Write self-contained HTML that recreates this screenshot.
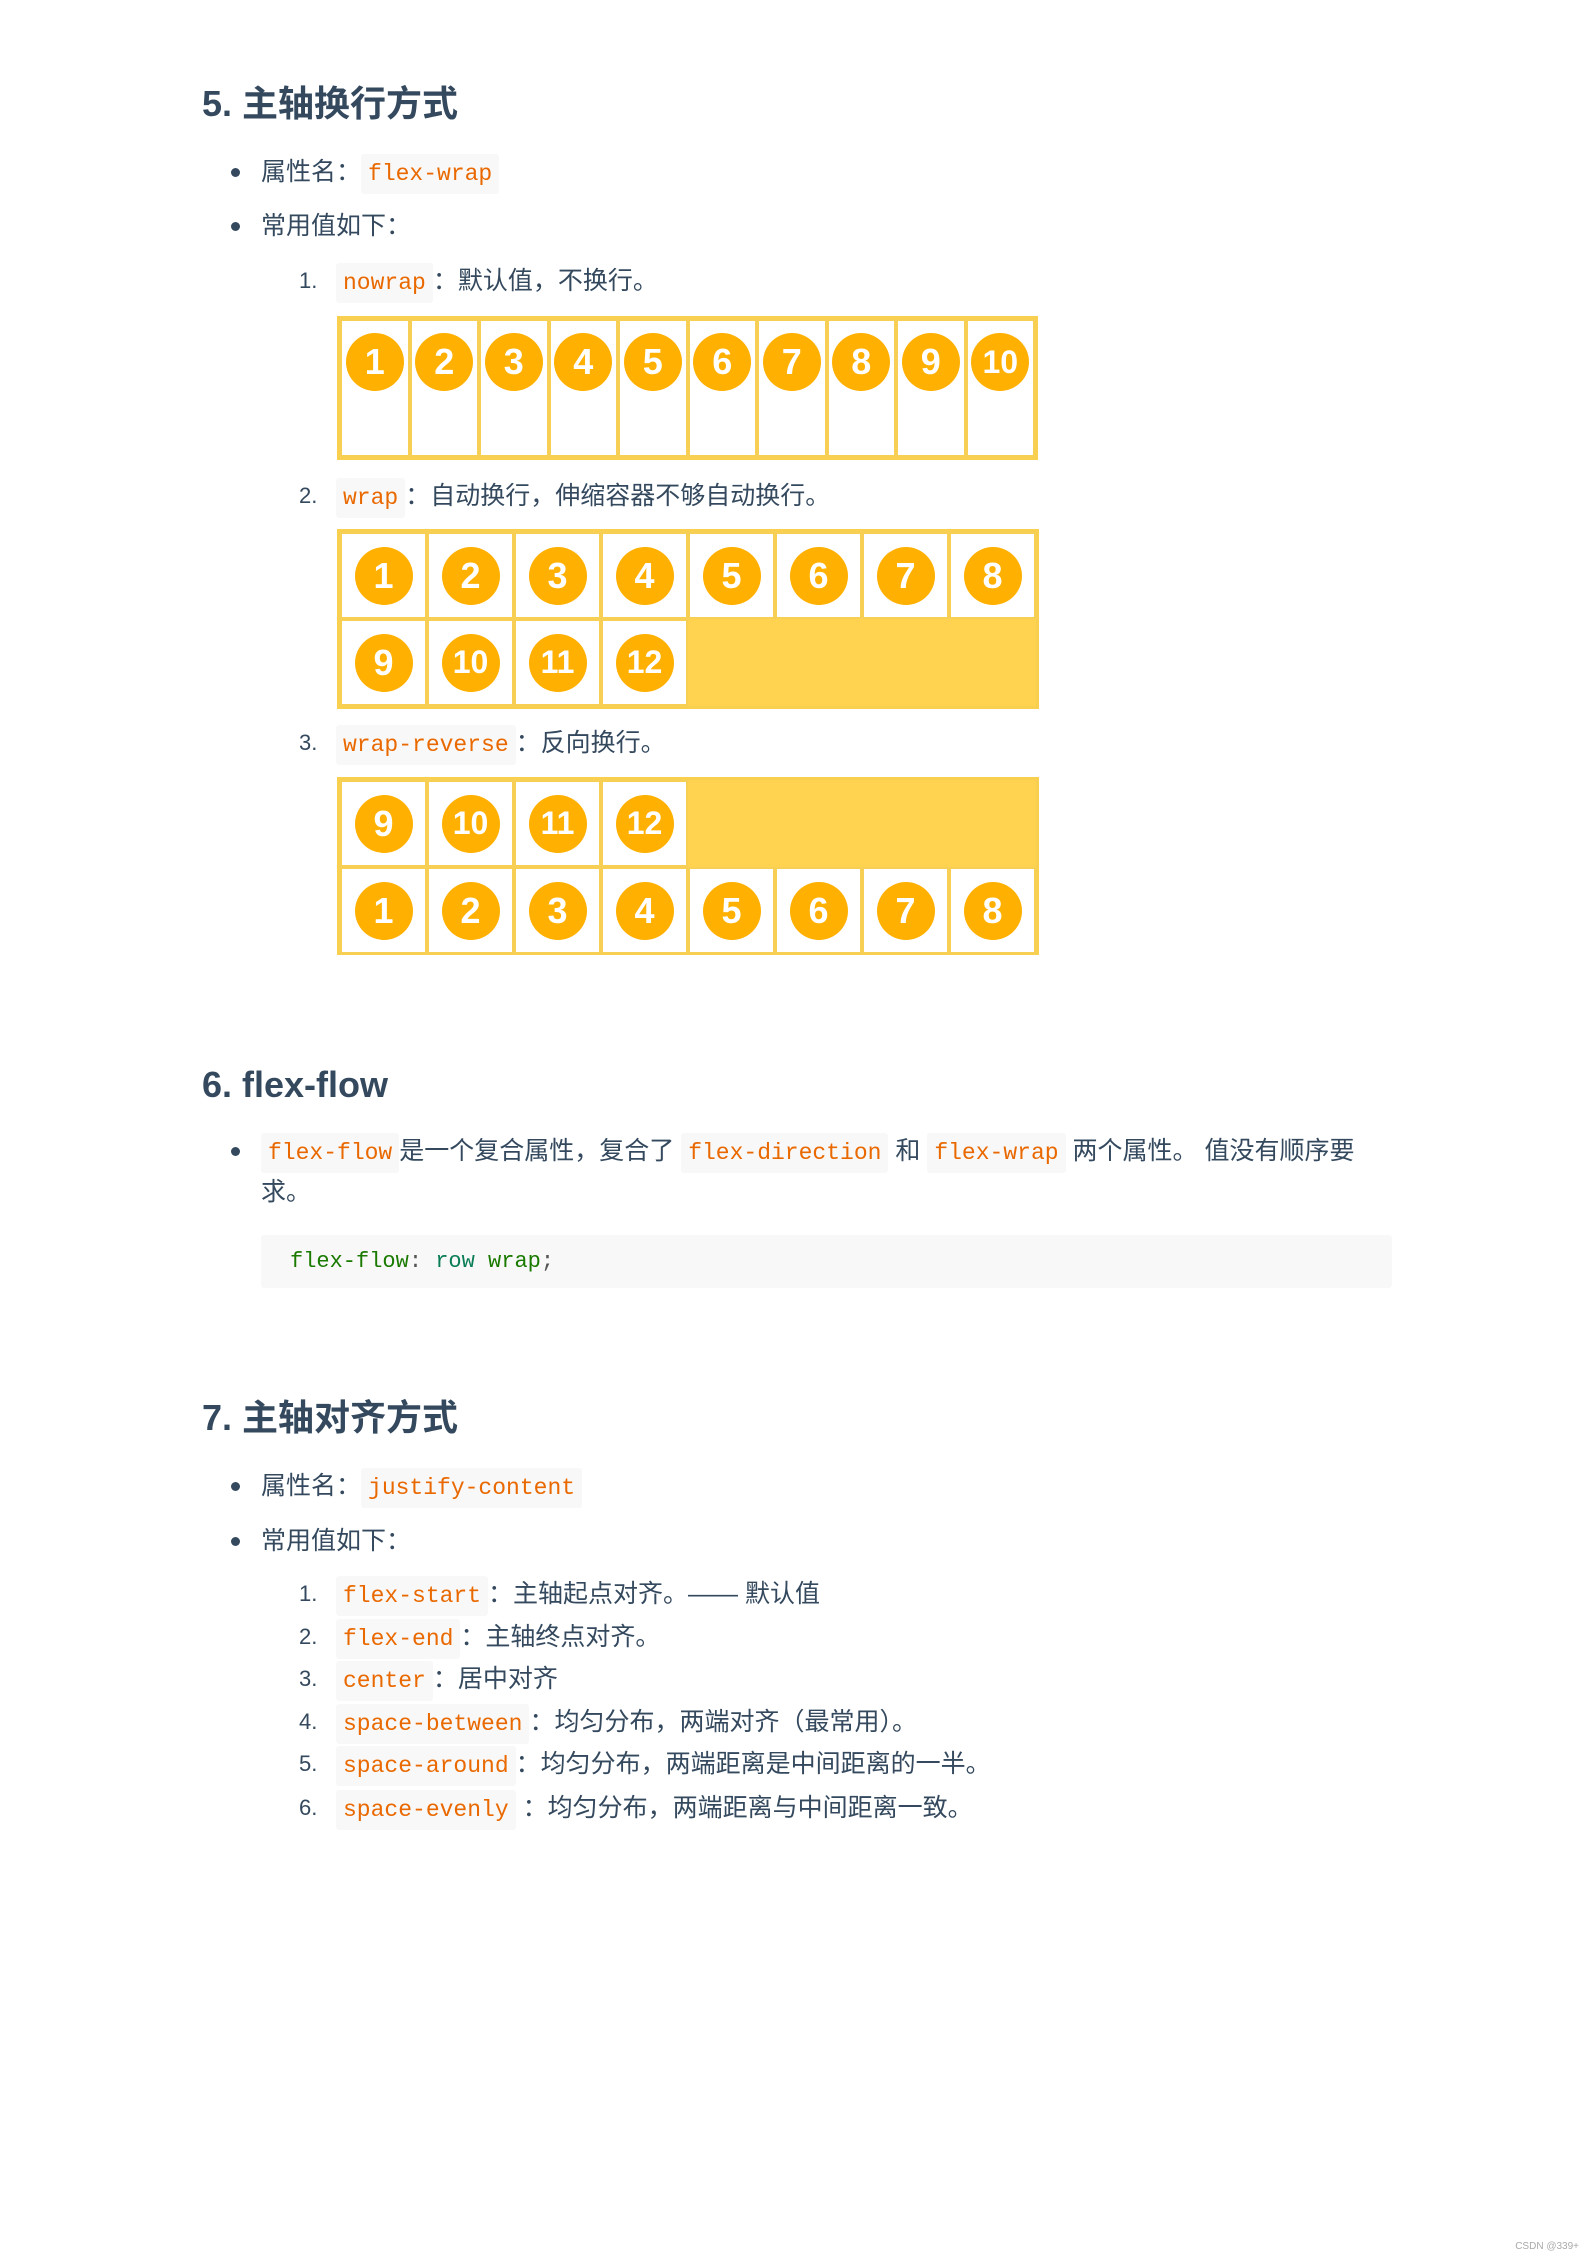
<!DOCTYPE html>
<html><head><meta charset="utf-8"><style>
*{margin:0;padding:0;box-sizing:border-box}
body{width:1587px;height:2257px;background:#fff;position:relative;font-family:"Liberation Sans","Noto Sans CJK SC",sans-serif;color:#34495e;font-size:25px;overflow:hidden}
.a{position:absolute;white-space:nowrap;line-height:1}
h2{position:absolute;font-size:36px;font-weight:bold;color:#34495e;line-height:1;white-space:nowrap}
.dot{position:absolute;width:9px;height:9px;border-radius:50%;background:#34495e}
code{font-family:"Liberation Mono",monospace;color:#e96900;background:#f8f8f8;padding:7px 7px;border-radius:3px;font-size:23px}
.box{position:absolute;border:3px solid #f9cf4f;background:#ffd34f;display:flex;flex-wrap:wrap;align-content:flex-start}
.c{border:2px solid #f7cf55;background:#fff;display:flex;justify-content:center}
.c span{width:58px;height:58px;border-radius:50%;background:#ffb000;color:#fff;font-weight:bold;font-size:36px;display:flex;align-items:center;justify-content:center;font-family:"Liberation Sans",sans-serif}
.n{position:absolute;font-size:22px;line-height:1}
</style></head><body>
<h2 style="left:202px;top:86px">5. 主轴换行方式</h2>
<div class="dot" style="left:231px;top:168px"></div>
<div class="a" style="left:261px;top:160px">属性名：<code>flex-wrap</code></div>
<div class="dot" style="left:231px;top:222px"></div>
<div class="a" style="left:261px;top:214px">常用值如下：</div>
<div class="n" style="left:299px;top:270px">1.</div>
<div class="a" style="left:336px;top:269px"><code>nowrap</code>：默认值，不换行。</div>
<div class="box" style="left:337px;top:316px;width:701px;height:144px;background:#fff">
<div class="c" style="width:69.5px;height:138px;padding-top:12px"><span>1</span></div><div class="c" style="width:69.5px;height:138px;padding-top:12px"><span>2</span></div><div class="c" style="width:69.5px;height:138px;padding-top:12px"><span>3</span></div><div class="c" style="width:69.5px;height:138px;padding-top:12px"><span>4</span></div><div class="c" style="width:69.5px;height:138px;padding-top:12px"><span>5</span></div><div class="c" style="width:69.5px;height:138px;padding-top:12px"><span>6</span></div><div class="c" style="width:69.5px;height:138px;padding-top:12px"><span>7</span></div><div class="c" style="width:69.5px;height:138px;padding-top:12px"><span>8</span></div><div class="c" style="width:69.5px;height:138px;padding-top:12px"><span>9</span></div><div class="c" style="width:69.5px;height:138px;padding-top:12px"><span style="font-size:32px">10</span></div>
</div>
<div class="n" style="left:299px;top:485px">2.</div>
<div class="a" style="left:336px;top:484px"><code>wrap</code>：自动换行，伸缩容器不够自动换行。</div>
<div class="box" style="left:337px;top:529px;width:702px;height:180px">
<div class="c" style="width:87px;height:87px;align-items:center"><span>1</span></div><div class="c" style="width:87px;height:87px;align-items:center"><span>2</span></div><div class="c" style="width:87px;height:87px;align-items:center"><span>3</span></div><div class="c" style="width:87px;height:87px;align-items:center"><span>4</span></div><div class="c" style="width:87px;height:87px;align-items:center"><span>5</span></div><div class="c" style="width:87px;height:87px;align-items:center"><span>6</span></div><div class="c" style="width:87px;height:87px;align-items:center"><span>7</span></div><div class="c" style="width:87px;height:87px;align-items:center"><span>8</span></div>
<div class="c" style="width:87px;height:87px;align-items:center"><span>9</span></div><div class="c" style="width:87px;height:87px;align-items:center"><span style="font-size:32px">10</span></div><div class="c" style="width:87px;height:87px;align-items:center"><span style="font-size:32px">11</span></div><div class="c" style="width:87px;height:87px;align-items:center"><span style="font-size:32px">12</span></div>
</div>
<div class="n" style="left:299px;top:732px">3.</div>
<div class="a" style="left:336px;top:731px"><code>wrap-reverse</code>：反向换行。</div>
<div class="box" style="left:337px;top:777px;width:702px;height:178px;align-content:flex-end;flex-wrap:wrap-reverse">
<div class="c" style="width:87px;height:87px;align-items:center"><span>1</span></div><div class="c" style="width:87px;height:87px;align-items:center"><span>2</span></div><div class="c" style="width:87px;height:87px;align-items:center"><span>3</span></div><div class="c" style="width:87px;height:87px;align-items:center"><span>4</span></div><div class="c" style="width:87px;height:87px;align-items:center"><span>5</span></div><div class="c" style="width:87px;height:87px;align-items:center"><span>6</span></div><div class="c" style="width:87px;height:87px;align-items:center"><span>7</span></div><div class="c" style="width:87px;height:87px;align-items:center"><span>8</span></div>
<div class="c" style="width:87px;height:87px;align-items:center"><span>9</span></div><div class="c" style="width:87px;height:87px;align-items:center"><span style="font-size:32px">10</span></div><div class="c" style="width:87px;height:87px;align-items:center"><span style="font-size:32px">11</span></div><div class="c" style="width:87px;height:87px;align-items:center"><span style="font-size:32px">12</span></div>
</div>
<h2 style="left:202px;top:1067px">6. flex-flow</h2>
<div class="dot" style="left:231px;top:1147px"></div>
<div class="a" style="left:261px;top:1139px"><code>flex-flow</code>是一个复合属性，复合了 <code>flex-direction</code> 和 <code>flex-wrap</code> 两个属性。 值没有顺序要</div>
<div class="a" style="left:261px;top:1180px">求。</div>
<div style="position:absolute;left:261px;top:1235px;width:1131px;height:53px;background:#f8f8f8;border-radius:3px"></div>
<div class="a" style="left:290px;top:1251px;font-family:'Liberation Mono',monospace;font-size:22px"><span style="color:#1a7a00">flex-flow</span><span style="color:#555">:</span> <span style="color:#0a7d55">row</span> <span style="color:#1a7a00">wrap</span><span style="color:#555">;</span></div>
<h2 style="left:202px;top:1400px">7. 主轴对齐方式</h2>
<div class="dot" style="left:231px;top:1482px"></div>
<div class="a" style="left:261px;top:1474px">属性名：<code>justify-content</code></div>
<div class="dot" style="left:231px;top:1537px"></div>
<div class="a" style="left:261px;top:1529px">常用值如下：</div>
<div class="n" style="left:299px;top:1583px">1.</div><div class="a" style="left:336px;top:1582px"><code>flex-start</code>：主轴起点对齐。—— 默认值</div>
<div class="n" style="left:299px;top:1626px">2.</div><div class="a" style="left:336px;top:1625px"><code>flex-end</code>：主轴终点对齐。</div>
<div class="n" style="left:299px;top:1668px">3.</div><div class="a" style="left:336px;top:1667px"><code>center</code>：居中对齐</div>
<div class="n" style="left:299px;top:1711px">4.</div><div class="a" style="left:336px;top:1710px"><code>space-between</code>：均匀分布，两端对齐（最常用）。</div>
<div class="n" style="left:299px;top:1753px">5.</div><div class="a" style="left:336px;top:1752px"><code>space-around</code>：均匀分布，两端距离是中间距离的一半。</div>
<div class="n" style="left:299px;top:1797px">6.</div><div class="a" style="left:336px;top:1796px"><code>space-evenly</code> ：均匀分布，两端距离与中间距离一致。</div>
<div class="a" style="right:8px;top:2242px;font-size:10px;color:#aaa">CSDN @339+</div>
</body></html>
